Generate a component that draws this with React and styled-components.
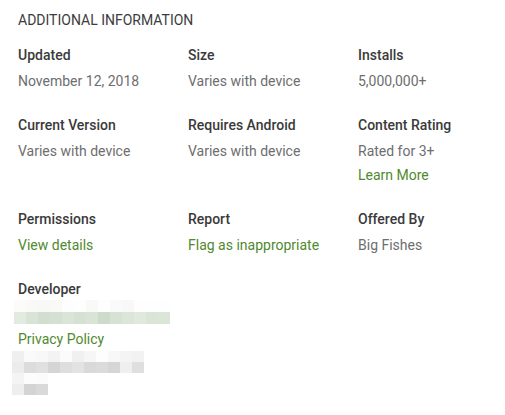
import React from "react";
import styled, { createGlobalStyle } from "styled-components";

const Global = createGlobalStyle`
  body {
    margin: 0;
    background: #fff;
    font-family: Roboto, "Noto Sans", Arial, sans-serif;
  }
`;

const Page = styled.div`
  padding: 10px 18px 0 18px;
`;

const Heading = styled.div`
  font-size: 14px;
  line-height: 20px;
  color: #3c3c3c;
  text-transform: uppercase;
  margin-bottom: 15px;
`;

const Grid = styled.div`
  display: grid;
  grid-template-columns: repeat(3, 170px);
  row-gap: 22px;
`;

const Cell = styled.div`
  display: flex;
  flex-direction: column;
  align-items: flex-start;
`;

const Title = styled.div`
  font-size: 14px;
  font-weight: 500;
  line-height: 20px;
  color: #3a3a3a;
  margin-bottom: ${(p) => p.$gap}px;
`;

const Value = styled.div`
  font-size: 14px;
  line-height: 24px;
  color: ${(p) => (p.$link ? "#4f8a2e" : "#6e6e6e")};
  margin-top: ${(p) => p.$top || 0}px;
`;

const Mosaic = styled.div`
  display: grid;
  grid-template-columns: repeat(${(p) => p.$cols}, 12px);
  grid-auto-rows: ${(p) => p.$rowH}px;
  margin-left: ${(p) => p.$shift}px;
`;

const Pixel = styled.div`
  background: ${(p) => p.$c};
`;

const devLink = [
  ["#fbfcfa", "#f9faf8", "#f8f9f7", "#f9faf8", "#fdfdfd", "#fefefe", "#f9faf7", "#fefefe", "#fafafa", "#f8f8f8", "#fefefe", "#fefefe", "#fefefe"],
  ["#e3eae0", "#d9e4d6", "#d2dfcf", "#d4e0d1", "#dae5d7", "#d5e1d2", "#d9e4d6", "#cddbc9", "#d6e2d3", "#dbe5d8", "#e1e9de", "#dae4d7", "#dbe5d8"],
];

const address = [
  ["#efefef", "#fafafa", "#f8f8f8", "#f3f3f3", "#fbfbfb", "#f0f0f0", "#f6f6f6", "#fdfdfd", "#f8f8f8", "#f4f4f4", "#f2f2f2"],
  ["#ececec", "#dcdcdc", "#e0e0e0", "#d5d5d5", "#dedede", "#e3e3e3", "#d9d9d9", "#dbdbdb", "#d6d6d6", "#efefef", "#dfdfdf"],
  ["#f4f4f4", "#fcfcfc", "#fbfbfb", null, null, null, null, null, null, null, null],
  ["#eeeeee", "#d4d4d4", "#d9d9d9", null, null, null, null, null, null, null, null],
];

function Pixelated({ rows, rowH, shift }) {
  return (
    <Mosaic $cols={rows[0].length} $rowH={rowH} $shift={shift}>
      {rows.flatMap((row, r) =>
        row.map((c, i) => <Pixel key={r + "-" + i} $c={c || "transparent"} />)
      )}
    </Mosaic>
  );
}

const info = [
  { title: "Updated", values: [{ text: "November 12, 2018" }] },
  { title: "Size", values: [{ text: "Varies with device" }] },
  { title: "Installs", values: [{ text: "5,000,000+" }] },
  { title: "Current Version", values: [{ text: "Varies with device" }] },
  { title: "Requires Android", values: [{ text: "Varies with device" }] },
  {
    title: "Content Rating",
    values: [{ text: "Rated for 3+" }, { text: "Learn More", link: true }],
  },
  { title: "Permissions", values: [{ text: "View details", link: true }] },
  { title: "Report", values: [{ text: "Flag as inappropriate", link: true }] },
  { title: "Offered By", values: [{ text: "Big Fishes" }] },
];

export default function App() {
  return (
    <>
      <Global />
      <Page>
        <Heading>Additional Information</Heading>
        <Grid>
          {info.map((item) => (
            <Cell key={item.title}>
              <Title $gap={4}>{item.title}</Title>
              {item.values.map((v) => (
                <Value key={v.text} $link={v.link}>
                  {v.text}
                </Value>
              ))}
            </Cell>
          ))}
          <Cell>
            <Title $gap={1}>Developer</Title>
            <Pixelated rows={devLink} rowH={12} shift={-4} />
            <Value $link $top={3}>Privacy Policy</Value>
            <Pixelated rows={address} rowH={11} shift={-6} />
          </Cell>
        </Grid>
      </Page>
    </>
  );
}
